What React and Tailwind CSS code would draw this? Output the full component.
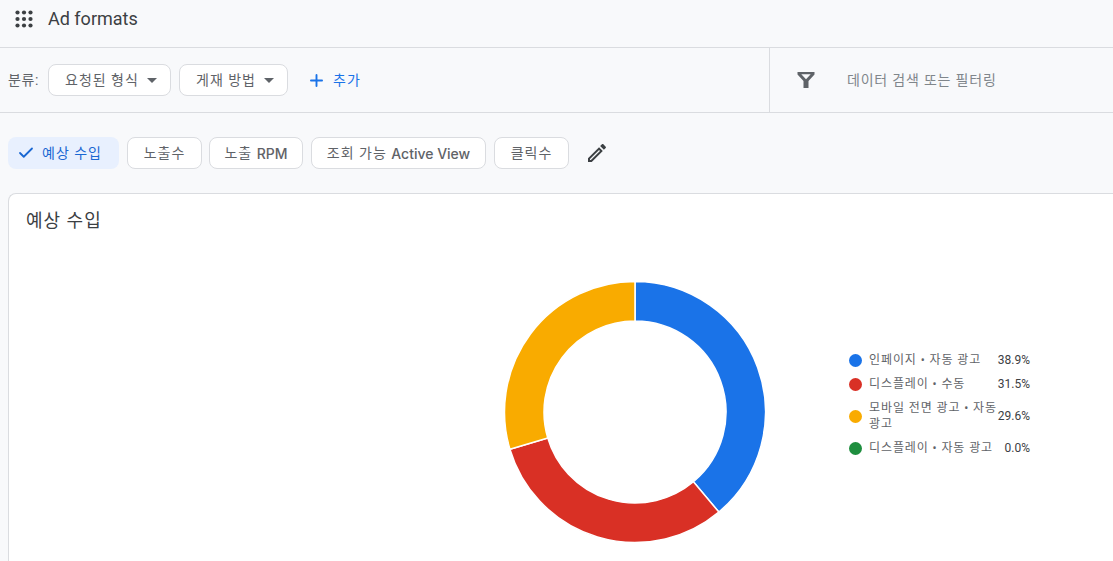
import React from "react";
import { Check, Plus } from "lucide-react";

const kr = "font-['Roboto','Noto_Sans_CJK_KR',sans-serif]";
const chip =
  "h-[32px] border border-[#dadce0] rounded-[8px] bg-white flex items-center justify-center text-[14px] tracking-[1px] text-[#5f6368] whitespace-nowrap";
const latin = "font-['Inter',sans-serif] font-medium tracking-normal text-[14px]";

const slices = [
  { label: "인페이지 • 자동 광고", value: 38.9, color: "#1a73e8", dot: "bg-[#1a73e8]" },
  { label: "디스플레이 • 수동", value: 31.5, color: "#d93025", dot: "bg-[#d93025]" },
  { label: "모바일 전면 광고 • 자동 광고", value: 29.6, color: "#f9ab00", dot: "bg-[#f9ab00]" },
  { label: "디스플레이 • 자동 광고", value: 0.0, color: "#1e8e3e", dot: "bg-[#1e8e3e]" },
];

function arcPath(from, to) {
  const cx = 131, cy = 131, R = 130.5, r = 91;
  const pt = (rad, pct) => {
    const a = (pct / 100) * 2 * Math.PI - Math.PI / 2;
    return `${cx + rad * Math.cos(a)} ${cy + rad * Math.sin(a)}`;
  };
  const large = to - from > 50 ? 1 : 0;
  return `M${pt(R, from)} A${R} ${R} 0 ${large} 1 ${pt(R, to)} L${pt(r, to)} A${r} ${r} 0 ${large} 0 ${pt(r, from)} Z`;
}

function Donut() {
  let acc = 0;
  return (
    <svg width="262" height="262" viewBox="0 0 262 262" className="shrink-0">
      {slices.map((s) => {
        const from = acc;
        acc += s.value;
        if (!s.value) return null;
        return <path key={s.label} d={arcPath(from, acc)} fill={s.color} stroke="#fff" strokeWidth="1.5" />;
      })}
    </svg>
  );
}

function Caret() {
  return <span className="w-0 h-0 border-x-[5px] border-x-transparent border-t-[5px] border-t-[#5f6368]" />;
}

function Dots() {
  return (
    <svg width="18" height="18" viewBox="0 0 18 18" fill="#3c4043">
      {[2.5, 9, 15.5].map((y) =>
        [2.5, 9, 15.5].map((x) => <circle key={`${x}-${y}`} cx={x} cy={y} r="2.1" />)
      )}
    </svg>
  );
}

export default function App() {
  return (
    <div className={`w-[1113px] h-[561px] overflow-hidden bg-[#f8f9fb] ${kr}`}>
      <header className="h-[48px] border-b border-[#dadce0] flex items-start pl-[15px]">
        <div className="mt-[10px]">
          <Dots />
        </div>
        <h1 className="ml-[15px] mt-[7px] text-[18px] leading-[24px] text-[#3c4043]">Ad formats</h1>
      </header>

      <div className="h-[65px] border-b border-[#dadce0] flex">
        <div className="w-[770px] border-r border-[#dadce0] flex items-center pl-[8px]">
          <span className="w-[40px] text-[14px] tracking-[0.6px] text-[#5f6368] whitespace-nowrap">분류:</span>
          <button className="h-[32px] w-[123px] border border-[#dadce0] rounded-[8px] bg-white flex items-center pl-[16px] gap-[8px] text-[14px] tracking-[1px] text-[#5f6368] whitespace-nowrap">
            요청된 형식 <Caret />
          </button>
          <button className="ml-[8px] h-[32px] w-[109px] border border-[#dadce0] rounded-[8px] bg-white flex items-center pl-[16px] gap-[8px] text-[14px] tracking-[1px] text-[#5f6368] whitespace-nowrap">
            게재 방법 <Caret />
          </button>
          <button className="ml-[19px] flex items-center gap-[7px] text-[14px] tracking-[1px] text-[#1a73e8]">
            <Plus size={19} strokeWidth={2.4} />
            추가
          </button>
        </div>
        <div className="flex-1 flex items-center pl-[26px]">
          <svg width="20" height="20" viewBox="0 0 20 20" fill="#5f6368">
            <path d="M1.500 2h17v2.400L12.500 11v7h-5v-7L1.500 4.400V2zm3.800 2.200L10 9.300l4.700-5.100H5.300z" fillRule="evenodd" />
          </svg>
          <span className="ml-[31px] text-[14px] tracking-[0.8px] text-[#80868b]">데이터 검색 또는 필터링</span>
        </div>
      </div>

      <div className="h-[80px] flex items-start pt-[24px] pl-[8px] gap-[8px]">
        <div className="h-[32px] w-[111px] rounded-[8px] bg-[#e8f0fe] flex items-center pl-[9px] gap-[7px] text-[14px] tracking-[1px] text-[#1967d2] whitespace-nowrap">
          <Check size={18} strokeWidth={2.4} />
          예상 수입
        </div>
        <div className={`${chip} w-[75px]`}>노출수</div>
        <div className={`${chip} w-[94px] -ml-[1px]`}>
          노출&nbsp;<span className={latin}>RPM</span>
        </div>
        <div className={`${chip} w-[175px]`}>
          조회 가능&nbsp;<span className={latin}>Active View</span>
        </div>
        <div className={`${chip} w-[75px]`}>클릭수</div>
        <svg width="24" height="24" viewBox="0 0 24 24" fill="#3c4043" className="ml-[8px] mt-[4px]">
          <path d="M14.060 9.020l.92.920L5.920 19H5v-.920l9.060-9.060M17.660 3c-.250 0-.510.100-.700.290l-1.830 1.830 3.750 3.750 1.830-1.830c.390-.390.390-1.020 0-1.410l-2.340-2.340c-.200-.200-.450-.290-.710-.290zm-3.600 3.190L3 17.250V21h3.750L17.810 9.940l-3.750-3.750z" />
        </svg>
      </div>

      <section className="ml-[8px] h-[368px] bg-white border-t border-l border-[#dadce0] rounded-tl-[8px]">
        <h2 className="pl-[17px] pt-[15px] text-[18px] tracking-[1px] leading-[24px] text-[#3c4043]">예상 수입</h2>
        <div className="flex items-start mt-[48px] ml-[495px]">
          <Donut />
          <ul className="ml-[83px] mt-[71px] w-[181px] flex flex-col gap-[8px] text-[12px] leading-[16px] text-[#5f6368]">
            {slices.map((s) => (
              <li key={s.label} className="flex items-center">
                <span className={`w-[13px] h-[13px] rounded-full shrink-0 ${s.dot}`} />
                <span className="ml-[7px] w-[128px] shrink-0 tracking-[0.9px] break-keep">{s.label}</span>
                <span className="ml-auto text-[#3c4043]">{s.value.toFixed(1)}%</span>
              </li>
            ))}
          </ul>
        </div>
      </section>
    </div>
  );
}
